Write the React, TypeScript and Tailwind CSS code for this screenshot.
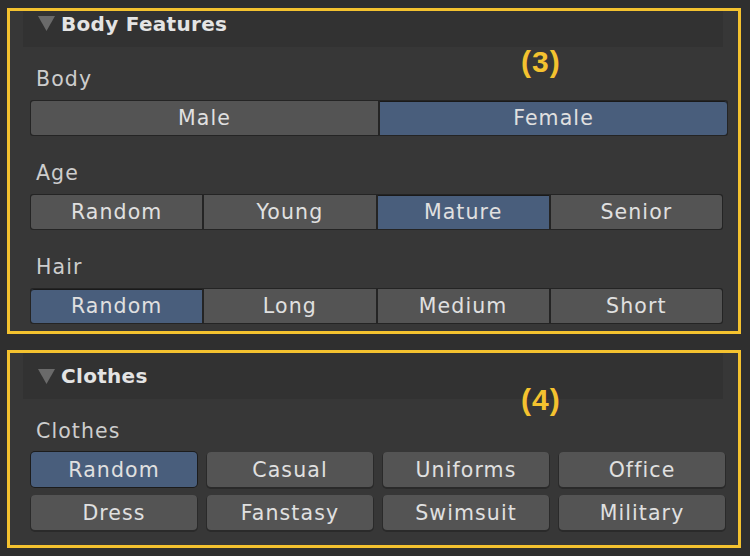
import React from "react";

type Row = { label: string; options: string[]; sel: number; w: string };

const rows: Row[] = [
  { label: "Body", options: ["Male", "Female"], sel: 1, w: "w-[698px]" },
  { label: "Age", options: ["Random", "Young", "Mature", "Senior"], sel: 2, w: "w-[693px]" },
  { label: "Hair", options: ["Random", "Long", "Medium", "Short"], sel: 0, w: "w-[693px]" },
];

const clothes = ["Random", "Casual", "Uniforms", "Office", "Dress", "Fanstasy", "Swimsuit", "Military"];

function Triangle() {
  return (
    <svg width="17" height="15" viewBox="0 0 17 15" className="ml-[15px] shrink-0">
      <polygon points="0,0 17,0 8.5,15" fill="#6a6a6a" />
    </svg>
  );
}

function Header({ title, tall }: { title: string; tall?: boolean }) {
  return (
    <div
      className={`ml-[13px] w-[700px] bg-[#323232] flex items-center ${
        tall ? "h-[46px]" : "h-[36px] pb-[11px]"
      }`}
    >
      <Triangle />
      <span className="ml-[6px] text-[20px] font-bold tracking-[0.3px] text-[#e4e4e4] leading-[24px]">{title}</span>
    </div>
  );
}

function Label({ text }: { text: string }) {
  return <div className="ml-[6px] mb-[9px] h-[24px] leading-[24px] text-[20.5px] tracking-[1.1px] text-[#cdcdcd]">{text}</div>;
}

function Segmented({ row }: { row: Row }) {
  return (
    <div className={`${row.w} h-[36px] flex gap-[2px] p-px bg-[#242424] rounded-[3px]`}>
      {row.options.map((o, i) => (
        <div
          key={o}
          className={`flex-1 flex items-center justify-center pt-px text-[20.5px] tracking-[1.1px] text-[#e0e0e0] ${
            i === row.sel ? "bg-[#495e7c] shadow-[inset_0_1px_0_#1a1a1a]" : "bg-[#545454]"
          } ${i === 0 ? "rounded-l-[3px]" : ""} ${i === row.options.length - 1 ? "rounded-r-[3px]" : ""}`}
        >
          {o}
        </div>
      ))}
    </div>
  );
}

export default function App() {
  return (
    <div className="relative w-[750px] h-[556px] bg-[#2f2f2f] pt-[8px] pl-[7px] font-['DejaVu_Sans',sans-serif] overflow-hidden">
      {/* Body Features */}
      <div className="w-[734px] h-[326px] border-[3px] border-[#f4c22f] bg-[#373737]">
        <Header title="Body Features" />
        <div className="pl-[20px] mt-[20px] flex flex-col gap-[25px]">
          {rows.map((r) => (
            <div key={r.label}>
              <Label text={r.label} />
              <Segmented row={r} />
            </div>
          ))}
        </div>
      </div>

      {/* Clothes */}
      <div className="mt-[16px] w-[734px] h-[198px] border-[3px] border-[#f4c22f] bg-[#373737]">
        <Header title="Clothes" tall />
        <div className="pl-[20px] mt-[20px]">
          <Label text="Clothes" />
          <div className="ml-px w-[694px] grid grid-cols-4 gap-x-[10px] gap-y-[8px]">
            {clothes.map((c, i) => (
              <div
                key={c}
                className={`h-[35px] rounded-[4px] flex items-center justify-center pt-px text-[20.5px] tracking-[1.1px] text-[#e0e0e0] ${
                  i === 0
                    ? "bg-[#495e7c] shadow-[0_0_0_1px_#1c1c1c]"
                    : "bg-[#545454] shadow-[0_1px_0_1px_#2a2a2a]"
                }`}
              >
                {c}
              </div>
            ))}
          </div>
        </div>
      </div>

      <span className="absolute left-[521px] top-[45px] text-[30px] leading-[34px] font-bold tracking-[1px] text-[#f4c22f] font-['Liberation_Sans',sans-serif]">
        (3)
      </span>
      <span className="absolute left-[521px] top-[383px] text-[30px] leading-[34px] font-bold tracking-[1px] text-[#f4c22f] font-['Liberation_Sans',sans-serif]">
        (4)
      </span>
    </div>
  );
}
